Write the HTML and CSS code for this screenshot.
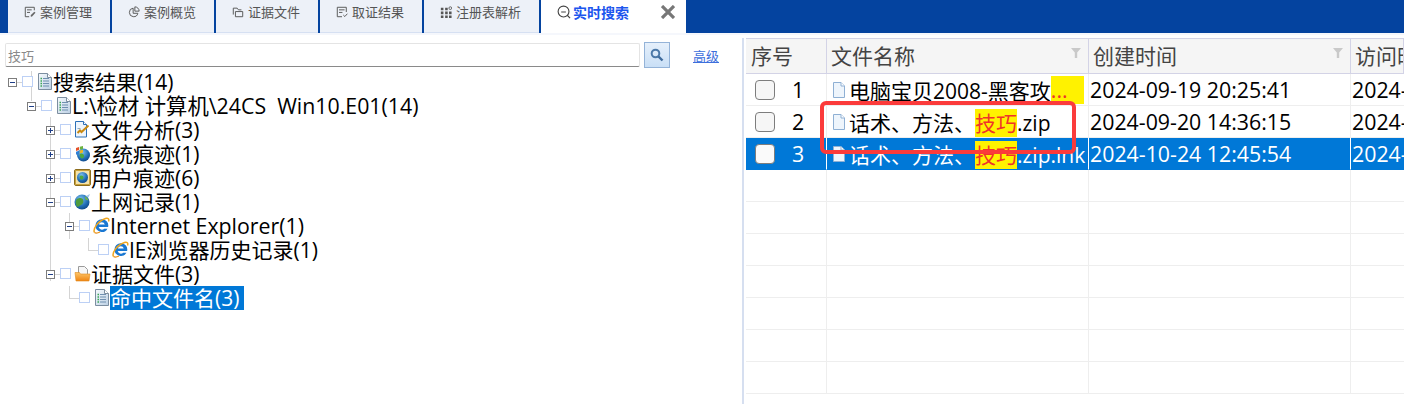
FILE: index.html
```html
<!DOCTYPE html>
<html lang="zh-CN">
<head>
<meta charset="utf-8">
<title>实时搜索</title>
<link rel="stylesheet" href="styles.css">
</head>
<body>
<svg class="defs" width="0" height="0" aria-hidden="true">
  <defs>
    <linearGradient id="pg" x1="0" y1="0" x2="1" y2="1"><stop offset="0" stop-color="#f6fafd"/><stop offset="1" stop-color="#bcd0e4"/></linearGradient>
    <radialGradient id="globe" cx=".4" cy=".3" r=".8"><stop offset="0" stop-color="#7fc1ee"/><stop offset=".6" stop-color="#1f6db5"/><stop offset="1" stop-color="#0d3f7c"/></radialGradient>
    <linearGradient id="fold" x1="0" y1="0" x2="0" y2="1"><stop offset="0" stop-color="#fdc66a"/><stop offset="1" stop-color="#ef8412"/></linearGradient>
    <symbol id="doc" viewBox="0 0 17 17">
      <path d="M2.500 .500H11.500L15.500 4.500V16.500H2.500Z" fill="url(#pg)" stroke="#7c8ea0"/>
      <path d="M11.500 .500V4.500H15.500" fill="#fff" stroke="#7c8ea0"/>
      <path d="M4.500 5.500h1.500M4.500 8h1.500M4.500 10.500h1.500M4.500 13h1.500" stroke="#3aa655" stroke-width="1.300"/>
      <path d="M7 5.500h6M7 8h6M7 10.500h6M7 13h6" stroke="#6f8fb0" stroke-width="1.100"/>
    </symbol>
    <symbol id="analysis" viewBox="0 0 17 17">
      <path d="M1.500 .500H9.500L12.500 3.500V16H1.500Z" fill="#eef5fc" stroke="#2d70b8"/>
      <path d="M9.500 .500V3.500H12.500" fill="#fff" stroke="#2d70b8"/>
      <path d="M3.500 12 6 9.500 7.500 11 14.500 4.500" fill="none" stroke="#c98a12" stroke-width="2"/>
      <path d="M3.500 7.500h3" stroke="#90a8c0"/>
    </symbol>
    <symbol id="system" viewBox="0 0 17 17">
      <circle cx="9.500" cy="10" r="6.500" fill="url(#globe)"/>
      <path d="M6 9c2-1 4 0 4 2s-2 3-3 2-2-3-1-4Z" fill="#4ea83c"/>
      <path d="M2 3 5 2V5L2 6Z" fill="#e5502a"/>
      <path d="M5.800 1.800 9 1V4L5.800 4.800Z" fill="#6cb33f"/>
      <path d="M2 6.700 5 5.700V8.700L2 9.700Z" fill="#2f7fd6"/>
      <path d="M5.800 5.500 9 4.700V7.500L5.800 8.500Z" fill="#f2b51c"/>
    </symbol>
    <symbol id="user" viewBox="0 0 17 17">
      <rect x=".500" y=".500" width="16" height="16" rx="1.500" fill="#f3e3ae" stroke="#8d6d1d"/>
      <rect x="1.500" y="1.500" width="14" height="14" fill="none" stroke="#c9a23c"/>
      <circle cx="8.500" cy="8.500" r="5.500" fill="url(#globe)"/>
      <path d="M6 7c2-1 3.500 0 3.500 1.500s-1.500 2.500-2.500 2-2-2.500-1-3.500Z" fill="#4ea83c"/>
    </symbol>
    <symbol id="web" viewBox="0 0 17 17">
      <circle cx="8" cy="9" r="7.500" fill="url(#globe)"/>
      <path d="M2.500 6.500c2-2 5.500-2 6.500 0s0 4.500-2 5.500-3.500 3-4.500 1-1-5.500 0-6.500Z" fill="#4f9c3d"/>
      <path d="M11 3.500c1.500.5 3 2 3.500 4-1.500 0-3-1-3.500-2Z" fill="#6fb34e"/>
      <path d="M12 3 16 1 14.500 4.500" fill="#9cc6e8"/>
    </symbol>
    <symbol id="ie" viewBox="0 0 17 17">
      <path d="M8.800 2.200a6.400 6.400 0 0 0-6.300 6.400 6.400 6.400 0 0 0 12 3.100H11.200a3.300 3.300 0 0 1-5.500-1.600h9.400A6.400 6.400 0 0 0 8.800 2.200Zm-3 5.400a3.100 3.100 0 0 1 6 0Z" fill="#1a78d2"/>
      <path d="M1.500 15.500C-.5 12 5 4 12.500 1.500c2.500-.7 4 .5 3 3" fill="none" stroke="#efa51e" stroke-width="1.500"/>
      <path d="M1.500 15.500c1.500 1 3.500.5 5.500-.5" fill="none" stroke="#e8901a" stroke-width="1.300"/>
    </symbol>
    <symbol id="folder" viewBox="0 0 17 17">
      <path d="M4.500 1.500H10.500L13.500 4.500V10H4.500Z" fill="#f6f6f6" stroke="#9a9a9a"/>
      <path d="M1 7.500H5.500L6.500 9H16L15 16H2Z" fill="url(#fold)" stroke="#e08a1c" stroke-width=".6"/>
    </symbol>
    <symbol id="file" viewBox="0 0 14 16">
      <path d="M1.500 .500H9L12.500 4V15.500H1.500Z" fill="#eef5fc" stroke="#8fb0d4"/>
      <path d="M9 .500V4H12.500" fill="#fff" stroke="#8fb0d4"/>
    </symbol>
    <symbol id="funnel" viewBox="0 0 10 10">
      <path d="M0 0H10L6.200 4.500V10H3.800V4.500Z" fill="#c9c9c9"/>
    </symbol>
  </defs>
</svg>

<header class="topbar">
  <nav class="tabs">
    <div class="tab">
      <svg class="tab-icon" viewBox="0 0 14 14"><path d="M12 5V1.500H1.500V12.500H6M3.500 4.500H9M3.500 7.500H7" fill="none" stroke="#555" stroke-width="1.100"/><path d="M8 12.500 7.800 10.800 12 6.600 13.400 8 9.400 12.300Z" fill="#666"/></svg>
      <span>案例管理</span>
    </div>
    <div class="tab">
      <svg class="tab-icon" viewBox="0 0 14 14"><path d="M6 2.500A5 5 0 1 0 11.500 8.500H6Z" fill="none" stroke="#555" stroke-width="1.100"/><path d="M8 1a5 5 0 0 1 5 5H8Z" fill="none" stroke="#555" stroke-width="1.100"/></svg>
      <span>案例概览</span>
    </div>
    <div class="tab">
      <svg class="tab-icon" viewBox="0 0 14 14"><path d="M1.500 10V2.500H6L7.500 4.500H11" fill="none" stroke="#555" stroke-width="1.100"/><path d="M4 6.500H12.500V12.500H4Z" fill="none" stroke="#555" stroke-width="1.100"/></svg>
      <span>证据文件</span>
    </div>
    <div class="tab">
      <svg class="tab-icon" viewBox="0 0 14 14"><path d="M7 12.500H1.500V1.500H12V7M3.500 4.500H10M3.500 7.500H7.500" fill="none" stroke="#555" stroke-width="1.100"/><path d="M8.500 10.500 10.300 12.300 13.300 9" fill="none" stroke="#555" stroke-width="1.100"/></svg>
      <span>取证结果</span>
    </div>
    <div class="tab tab-wide">
      <svg class="tab-icon" viewBox="0 0 14 14"><path d="M1 2h3v3H1ZM6 2h3v3H6ZM1 6.500h3v3H1ZM6 6.500h3v3H6ZM1 11h3v3H1ZM6 11h3v3H6ZM10.500 11h3v3h-3ZM10.500 6.500h3v3h-3Z" fill="#555"/><circle cx="12" cy="2.500" r="1.600" fill="none" stroke="#555"/></svg>
      <span>注册表解析</span>
    </div>
    <div class="tab tab-active">
      <svg class="tab-icon-active" viewBox="0 0 15 15"><circle cx="7" cy="7" r="5.800" fill="none" stroke="#444" stroke-width="1.200"/><path d="M4.500 7.500H9.500M11 11 14 14" stroke="#444" stroke-width="1.200"/></svg>
      <span class="tab-label-active">实时搜索</span>
      <svg class="tab-close" viewBox="0 0 14 14"><path d="M1 1 13 13M13 1 1 13" stroke="#777" stroke-width="3.200"/></svg>
    </div>
  </nav>
</header>

<main class="workspace">
  <section class="left">
    <div class="search">
      <input class="search-input" type="text" placeholder="技巧">
      <button class="search-btn" type="button" aria-label="搜索">
        <svg viewBox="0 0 14 14" width="14" height="14"><circle cx="5.500" cy="5.500" r="3.800" fill="none" stroke="#4b78a8" stroke-width="2"/><path d="M8.500 8.500 12.500 12.500" stroke="#3f6b9c" stroke-width="2.400"/></svg>
      </button>
      <a class="adv" href="#">高级</a>
    </div>

    <div class="tree">
      <i class="guide g-a"></i><i class="guide g-b"></i><i class="guide g-c"></i><i class="guide g-d"></i>
      <i class="guide g-e"></i><i class="guide g-f"></i><i class="guide g-g"></i>

      <div class="node d0"><b class="exp minus"></b><i class="dash"></i><b class="chk"></b><svg class="ico"><use href="#doc"/></svg><span class="lbl">搜索结果(14)</span></div>
      <div class="node d1"><b class="exp minus"></b><i class="dash"></i><b class="chk"></b><svg class="ico"><use href="#doc"/></svg><span class="lbl lbl-latin">L:\检材 计算机\24CS&nbsp; Win10.E01(14)</span></div>
      <div class="node d2"><b class="exp plus"></b><i class="dash"></i><b class="chk"></b><svg class="ico"><use href="#analysis"/></svg><span class="lbl">文件分析(3)</span></div>
      <div class="node d2"><b class="exp plus"></b><i class="dash"></i><b class="chk"></b><svg class="ico"><use href="#system"/></svg><span class="lbl">系统痕迹(1)</span></div>
      <div class="node d2"><b class="exp plus"></b><i class="dash"></i><b class="chk"></b><svg class="ico"><use href="#user"/></svg><span class="lbl">用户痕迹(6)</span></div>
      <div class="node d2"><b class="exp minus"></b><i class="dash"></i><b class="chk"></b><svg class="ico"><use href="#web"/></svg><span class="lbl">上网记录(1)</span></div>
      <div class="node d3"><b class="exp minus"></b><i class="dash"></i><b class="chk"></b><svg class="ico"><use href="#ie"/></svg><span class="lbl lbl-latin">Internet Explorer(1)</span></div>
      <div class="node d4"><b class="exp none"></b><i class="dash"></i><b class="chk"></b><svg class="ico"><use href="#ie"/></svg><span class="lbl">IE浏览器历史记录(1)</span></div>
      <div class="node d2"><b class="exp minus"></b><i class="dash"></i><b class="chk"></b><svg class="ico"><use href="#folder"/></svg><span class="lbl">证据文件(3)</span></div>
      <div class="node d3"><b class="exp none"></b><i class="dash"></i><b class="chk"></b><svg class="ico"><use href="#doc"/></svg><span class="lbl lbl-sel">命中文件名(3)</span></div>
    </div>
  </section>

  <div class="splitter"></div>

  <section class="right">
    <div class="grid">
      <div class="row head">
        <div class="cell c-no"><span>序号</span></div>
        <div class="cell c-name"><span>文件名称</span><svg class="funnel"><use href="#funnel"/></svg></div>
        <div class="cell c-date"><span>创建时间</span><svg class="funnel"><use href="#funnel"/></svg></div>
        <div class="cell c-rest"><span>访问时间</span></div>
      </div>
      <div class="row">
        <div class="cell c-no"><b class="box"></b><span class="num">1</span></div>
        <div class="cell c-name"><svg class="fico"><use href="#file"/></svg><span class="fname">电脑宝贝2008-黑客攻</span><span class="hit hit-fill">...</span></div>
        <div class="cell c-date">2024-09-19 20:25:41</div>
        <div class="cell c-rest">2024-09-19 20:25:41</div>
      </div>
      <div class="row">
        <div class="cell c-no"><b class="box"></b><span class="num">2</span></div>
        <div class="cell c-name"><svg class="fico"><use href="#file"/></svg><span class="fname">话术、方法、<span class="hit">技巧</span>.zip</span></div>
        <div class="cell c-date">2024-09-20 14:36:15</div>
        <div class="cell c-rest">2024-09-20 14:36:15</div>
      </div>
      <div class="row sel">
        <div class="cell c-no"><b class="box"></b><span class="num">3</span></div>
        <div class="cell c-name"><svg class="fico"><use href="#file"/></svg><span class="fname">话术、方法、<span class="hit">技巧</span>.zip.lnk</span></div>
        <div class="cell c-date">2024-10-24 12:45:54</div>
        <div class="cell c-rest">2024-10-24 12:45:54</div>
      </div>
      <div class="row"><div class="cell c-no"></div><div class="cell c-name"></div><div class="cell c-date"></div><div class="cell c-rest"></div></div>
      <div class="row"><div class="cell c-no"></div><div class="cell c-name"></div><div class="cell c-date"></div><div class="cell c-rest"></div></div>
      <div class="row"><div class="cell c-no"></div><div class="cell c-name"></div><div class="cell c-date"></div><div class="cell c-rest"></div></div>
      <div class="row"><div class="cell c-no"></div><div class="cell c-name"></div><div class="cell c-date"></div><div class="cell c-rest"></div></div>
      <div class="row"><div class="cell c-no"></div><div class="cell c-name"></div><div class="cell c-date"></div><div class="cell c-rest"></div></div>
      <div class="row"><div class="cell c-no"></div><div class="cell c-name"></div><div class="cell c-date"></div><div class="cell c-rest"></div></div>
      <div class="row"><div class="cell c-no"></div><div class="cell c-name"></div><div class="cell c-date"></div><div class="cell c-rest"></div></div>
    </div>
    <div class="callout"></div>
  </section>
</main>
</body>
</html>
```

FILE: styles.css
```css
* { box-sizing: border-box; }

html, body {
  margin: 0;
  height: 100%;
  overflow: hidden;
  background: #fff;
  color: #000;
  font-family: "Open Sans", "Noto Sans CJK SC", sans-serif;
}

.defs { position: absolute; }

/* top tab strip */
.topbar {
  height: 33px;
  background: #04439f;
  padding-left: 8px;
}

.tabs { display: flex; height: 33px; }

.tab {
  width: 102px;
  height: 33px;
  margin-right: 2px;
  background: #edf1f8;
  border-bottom: 1px solid #d6e0f2;
  display: flex;
  align-items: center;
  justify-content: center;
  gap: 4px;
  padding: 0 2px 9px 0;
  font-size: 13px;
  color: #555;
}

.tab-wide { width: 115px; }

.tab-icon { width: 12px; height: 12px; }

.tab-active {
  width: 145px;
  margin: 0;
  background: #fff;
  border-bottom-color: #fff;
  justify-content: flex-start;
  padding-left: 16px;
  gap: 2px;
}

.tab-icon-active { width: 14px; height: 14px; }

.tab-label-active {
  font-size: 14px;
  font-weight: 700;
  color: #1c56ee;
}

.tab-close {
  width: 14px;
  height: 14px;
  margin: 1px 0 0 30px;
}

/* body */
.workspace {
  display: flex;
  height: 371px;
  border-top: 2px solid #f5f7fc;
}

.left { width: 742px; flex: none; }

.splitter {
  width: 2px;
  flex: none;
  margin-top: 3px;
  background: #d6dff0;
}

.right {
  flex: 1;
  min-width: 0;
  position: relative;
  margin-left: 2px;
  padding-top: 3px;
}

/* search row */
.search {
  display: flex;
  align-items: flex-start;
  height: 35px;
  padding: 7px 0 0 5px;
}

.search-input {
  width: 635px;
  height: 24px;
  margin: 1px 0 0;
  padding: 0 2px;
  border: 1px solid #e4e4e4;
  border-bottom: 1px solid #8a8a8a;
  border-radius: 2px;
  outline: 0;
  font: 13px "Noto Sans CJK SC", sans-serif;
}

.search-input::placeholder { color: #8a8a8a; opacity: 1; }

.search-btn {
  width: 26px;
  height: 26px;
  margin-left: 4px;
  padding: 0;
  display: flex;
  align-items: center;
  justify-content: center;
  border: 1px solid #94b3d8;
  background: linear-gradient(#e6f0fb, #c9dff6);
}

.adv {
  margin: 6px 0 0 23px;
  font: 13px/15px "Noto Sans CJK SC", sans-serif;
  color: #3d6fdc;
}

/* tree */
.tree { position: relative; padding-left: 8px; }

.node {
  position: relative;
  display: flex;
  align-items: center;
  height: 24px;
  white-space: nowrap;
}

.d1 { margin-left: 19px; }
.d2 { margin-left: 38px; }
.d3 { margin-left: 57px; }
.d4 { margin-left: 76px; }

.exp {
  position: relative;
  z-index: 1;
  width: 9px;
  height: 9px;
  flex: none;
  background: #fff;
  border: 1px solid #7d7d7d;
}

.exp::before {
  content: "";
  position: absolute;
  left: 1px;
  top: 3px;
  width: 5px;
  height: 1px;
  background: #1f3f88;
}

.plus::after {
  content: "";
  position: absolute;
  left: 3px;
  top: 1px;
  width: 1px;
  height: 5px;
  background: #1f3f88;
}

.none { border-color: transparent; background: none; }
.none::before { display: none; }

.dash {
  width: 5px;
  height: 1px;
  flex: none;
  background: #d4d4d4;
}

.chk {
  width: 11px;
  height: 11px;
  flex: none;
  margin-top: -1px;
  background: #fff;
  border: 1px solid #bcd0f5;
}

.ico {
  width: 17px;
  height: 17px;
  flex: none;
  margin: -2px 0 0 3px;
}

.lbl {
  font-size: 21px;
  line-height: 24px;
}

.lbl-latin { font-size: 21.33px; }

.lbl-sel {
  padding-right: 5px;
  background: #0078d7;
  color: #fff;
}

/* tree guide lines drawn over the row stack */
.guide { position: absolute; background: #d4d4d4; }
.g-a { left: 31px; top: 1px; width: 1px; height: 30px; }
.g-b { left: 50px; top: 47px; width: 1px; height: 164px; }
.g-c { left: 69px; top: 143px; width: 1px; height: 26px; }
.g-d { left: 88px; top: 168px; width: 1px; height: 12px; }
.g-e { left: 88px; top: 180px; width: 10px; height: 1px; }
.g-f { left: 69px; top: 216px; width: 1px; height: 12px; }
.g-g { left: 69px; top: 228px; width: 10px; height: 1px; }

/* result grid */
.grid { width: 100%; overflow: hidden; }

.row {
  display: grid;
  grid-template-columns: 81px 262px 262px 1fr;
  height: 32px;
  font-size: 21.33px;
  white-space: nowrap;
}

.cell {
  display: flex;
  align-items: center;
  min-width: 0;
  overflow: hidden;
  padding-left: 1px;
  border-right: 1px solid #eeeeee;
  border-bottom: 1px solid #eeeeee;
}

.head {
  height: 36px;
  background: #f5f5f5;
  color: #444;
  font-size: 21px;
  border-top: 1px solid #d3d3e6;
  border-bottom: 1px solid #d3d3e6;
}

.head .cell {
  justify-content: space-between;
  padding: 0 7px 2px 4px;
  border-bottom: 0;
  border-right: 1px solid #d3d3e6;
}

.head .c-no { padding-left: 5px; }

.funnel { width: 10px; height: 10px; flex: none; margin-bottom: 4px; }

.c-rest { border-right: 0; }
.c-no { padding-left: 9px; }
.c-name { padding-left: 5px; }

.box {
  width: 20px;
  height: 20px;
  flex: none;
  background: #f6f6f6;
  border: 1px solid #7d7d7d;
  border-radius: 4px;
}

.num { margin-left: 17px; }

.fico { width: 14px; height: 16px; flex: none; margin-right: 3px; }

.fname { flex: none; font-size: 21px; }

.hit {
  display: inline-block;
  height: 28px;
  line-height: 28px;
  background: #fff200;
  color: #f0332a;
}

.hit-fill { width: 33px; flex: none; }

.sel { background: #0078d7; color: #fff; }
.sel .cell { border-right-color: #fff; border-bottom-color: #0078d7; }
.sel .box { background: #fafafa; }

.callout {
  position: absolute;
  left: 74px;
  top: 66px;
  width: 256px;
  height: 53px;
  border: 4px solid #fb3b3b;
  border-radius: 6px;
}
```
